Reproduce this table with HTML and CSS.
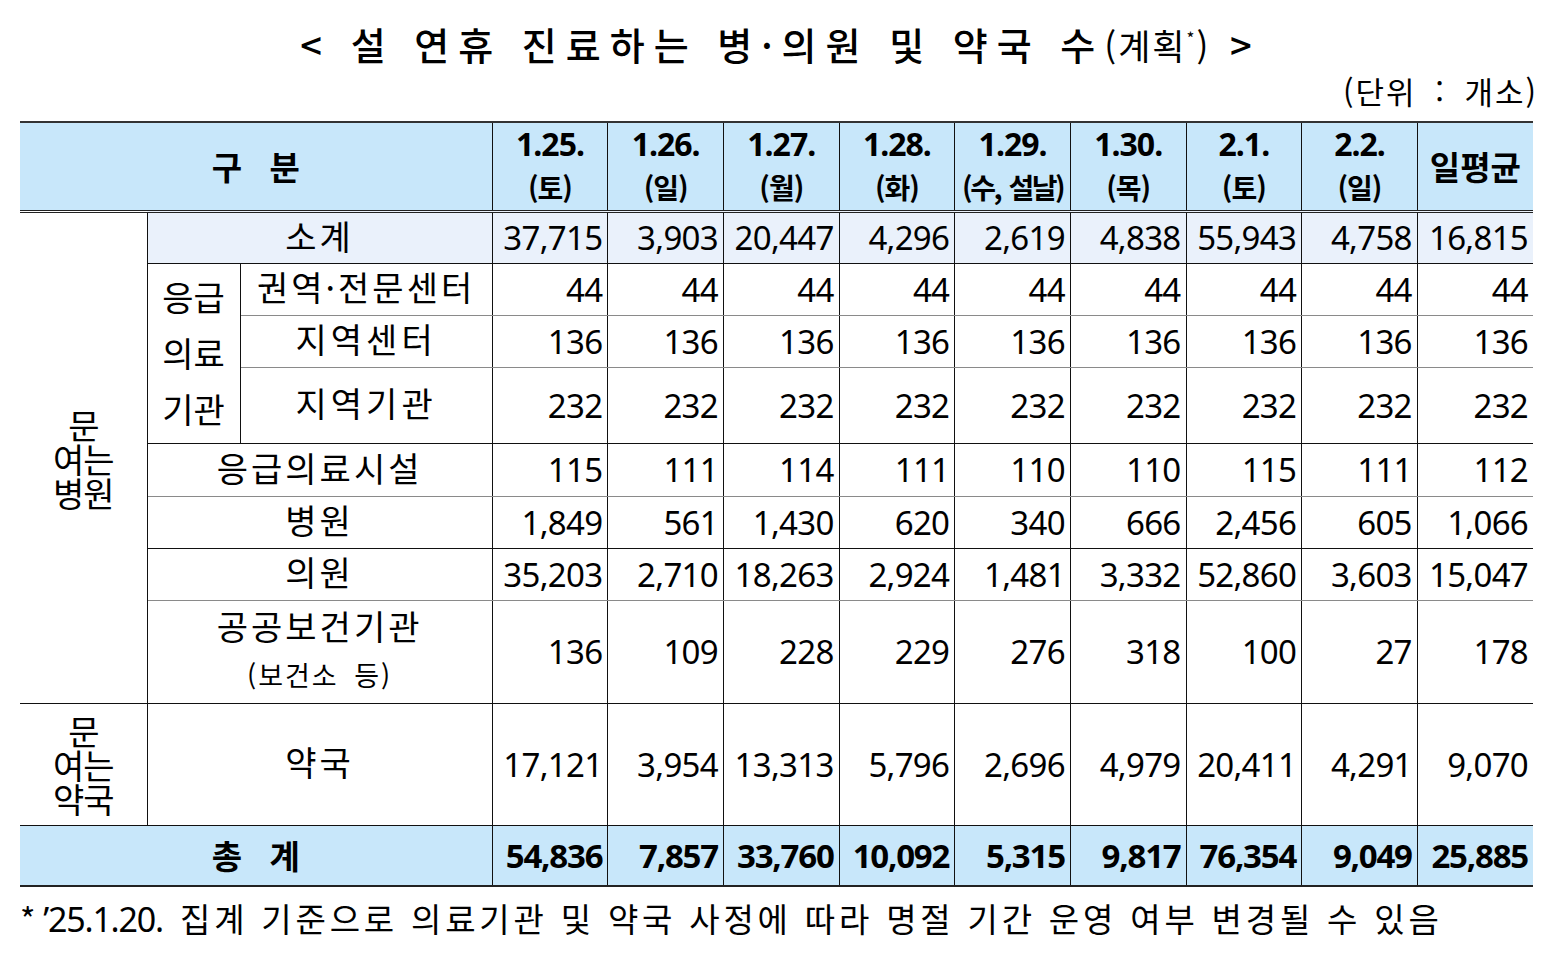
FILE: index.html
```html
<!DOCTYPE html>
<html lang="ko">
<head>
<meta charset="utf-8">
<title>설 연휴 진료하는 병·의원 및 약국 수</title>
<link rel="stylesheet" href="styles.css">
</head>
<body>
<div class="page">
  <h1 class="title">&lt; 설 연휴 진료하는 병·의원 및 약국 수<span class="plan">(계획<sup>*</sup>)</span> &gt;</h1>
  <div class="unit">(단위 : 개소)</div>
  <table class="stats">
    <colgroup>
      <col class="c1"><col class="c2"><col class="c3">
      <col class="cd"><col class="cd"><col class="cd"><col class="cd"><col class="cd"><col class="cd"><col class="cd"><col class="cd"><col class="cd">
    </colgroup>
    <thead>
      <tr class="r-head">
        <th colspan="3" class="gubun">구 분</th>
        <th><span class="d">1.25.</span><span class="w">(토)</span></th>
        <th><span class="d">1.26.</span><span class="w">(일)</span></th>
        <th class="gv"><span class="d">1.27.</span><span class="w">(월)</span></th>
        <th><span class="d">1.28.</span><span class="w">(화)</span></th>
        <th><span class="d">1.29.</span><span class="w narrow">(수, 설날)</span></th>
        <th><span class="d">1.30.</span><span class="w">(목)</span></th>
        <th class="gv"><span class="d">2.1.</span><span class="w">(토)</span></th>
        <th><span class="d">2.2.</span><span class="w">(일)</span></th>
        <th class="avg">일평균</th>
      </tr>
    </thead>
    <tbody>
      <tr class="r-sub">
        <td rowspan="8" class="side">문<br>여는<br>병원</td>
        <td colspan="2" class="lbl sub">소계</td>
        <td class="n sub">37,715</td><td class="n sub">3,903</td><td class="n sub gv">20,447</td><td class="n sub">4,296</td><td class="n sub">2,619</td><td class="n sub">4,838</td><td class="n sub gv">55,943</td><td class="n sub">4,758</td><td class="n sub">16,815</td>
      </tr>
      <tr class="r52 gl">
        <td rowspan="3" class="emg">응급<br>의료<br>기관</td>
        <td class="lbl">권역·전문센터</td>
        <td class="n">44</td><td class="n">44</td><td class="n gv">44</td><td class="n">44</td><td class="n">44</td><td class="n">44</td><td class="n gv">44</td><td class="n">44</td><td class="n">44</td>
      </tr>
      <tr class="r52 gl">
        <td class="lbl sp">지역센터</td>
        <td class="n">136</td><td class="n">136</td><td class="n gv">136</td><td class="n">136</td><td class="n">136</td><td class="n">136</td><td class="n gv">136</td><td class="n">136</td><td class="n">136</td>
      </tr>
      <tr class="r76">
        <td class="lbl sp">지역기관</td>
        <td class="n">232</td><td class="n">232</td><td class="n gv">232</td><td class="n">232</td><td class="n">232</td><td class="n">232</td><td class="n gv">232</td><td class="n">232</td><td class="n">232</td>
      </tr>
      <tr class="r53 gl">
        <td colspan="2" class="lbl">응급의료시설</td>
        <td class="n">115</td><td class="n">111</td><td class="n gv">114</td><td class="n">111</td><td class="n">110</td><td class="n">110</td><td class="n gv">115</td><td class="n">111</td><td class="n">112</td>
      </tr>
      <tr class="r52">
        <td colspan="2" class="lbl">병원</td>
        <td class="n">1,849</td><td class="n">561</td><td class="n gv">1,430</td><td class="n">620</td><td class="n">340</td><td class="n">666</td><td class="n gv">2,456</td><td class="n">605</td><td class="n">1,066</td>
      </tr>
      <tr class="r52 gl">
        <td colspan="2" class="lbl">의원</td>
        <td class="n">35,203</td><td class="n">2,710</td><td class="n gv">18,263</td><td class="n">2,924</td><td class="n">1,481</td><td class="n">3,332</td><td class="n gv">52,860</td><td class="n">3,603</td><td class="n">15,047</td>
      </tr>
      <tr class="r102">
        <td colspan="2" class="lbl pub"><span class="pub-main">공공보건기관</span><span class="pub-note">(보건소 등)</span></td>
        <td class="n">136</td><td class="n">109</td><td class="n gv">228</td><td class="n">229</td><td class="n">276</td><td class="n">318</td><td class="n gv">100</td><td class="n">27</td><td class="n">178</td>
      </tr>
      <tr class="r122">
        <td class="side">문<br>여는<br>약국</td>
        <td colspan="2" class="lbl">약국</td>
        <td class="n">17,121</td><td class="n">3,954</td><td class="n gv">13,313</td><td class="n">5,796</td><td class="n">2,696</td><td class="n">4,979</td><td class="n gv">20,411</td><td class="n">4,291</td><td class="n">9,070</td>
      </tr>
      <tr class="r-total">
        <th colspan="3" class="gubun">총 계</th>
        <td class="n tot">54,836</td><td class="n tot">7,857</td><td class="n tot gv">33,760</td><td class="n tot">10,092</td><td class="n tot">5,315</td><td class="n tot">9,817</td><td class="n tot gv">76,354</td><td class="n tot">9,049</td><td class="n tot">25,885</td>
      </tr>
    </tbody>
  </table>
  <p class="note">*<span class="nd">’25.1.20.</span> 집계 기준으로 의료기관 및 약국 사정에 따라 명절 기간 운영 여부 변경될 수 있음</p>
</div>
</body>
</html>
```

FILE: styles.css
```css
html, body {
  margin: 0;
  padding: 0;
  background: #ffffff;
}

body {
  font-family: "Noto Sans", "Noto Sans CJK KR", sans-serif;
  color: #000;
}

.page {
  width: 1513px;
  padding: 0 0 0 20px;
}

.title {
  margin: 0;
  padding-top: 17px;
  height: 56px;
  text-align: center;
  font-family: "Noto Sans CJK KR", sans-serif;
  font-weight: 500;
  font-size: 38px;
  line-height: 54px;
  letter-spacing: 9px;
  white-space: nowrap;
  padding-left: 8px;
}

.plan {
  font-weight: 400;
  font-size: 35px;
  letter-spacing: 2px;
}

.plan sup {
  font-size: 17px;
  vertical-align: 15px;
  line-height: 0;
}

.unit {
  text-align: right;
  font-family: "Noto Sans CJK KR", sans-serif;
  font-size: 31px;
  line-height: 40px;
  height: 40px;
  margin-right: -5px;
  letter-spacing: 2px;
  word-spacing: 8px;
  margin-top: -2px;
  margin-bottom: 10px;
}

.stats {
  width: 1513px;
  table-layout: fixed;
  border-collapse: collapse;
  border-top: 2px solid #333;
  border-bottom: 2px solid #222;
}

.c1 { width: 127px; }
.c2 { width: 93px; }
.c3 { width: 252px; }
.cd { width: 115.6px; }

.stats th,
.stats td {
  border: 1px solid #111;
  padding: 0;
  vertical-align: middle;
}

.stats tr > :first-child {
  border-left: none;
}

.stats tr > :last-child {
  border-right: none;
}

.stats .gv {
  border-left-color: #8a8a8a;
}

.stats tr.gl > td {
  border-bottom-color: #8a8a8a;
}

.stats tr.gl > td.emg {
  border-bottom-color: #111;
}

.r-head {
  height: 89px;
}

.r-head th {
  background: #c8e7fa;
  border-bottom: 3px double #222;
  text-align: center;
  font-weight: 700;
}

.gubun {
  font-family: "Noto Sans CJK KR", sans-serif;
  font-size: 33px;
  font-weight: 700;
  letter-spacing: 10px;
  word-spacing: -2px;
  padding-left: 10px !important;
  text-align: center;
}

.d {
  display: block;
  font-family: "Noto Sans", "Noto Sans CJK KR", sans-serif;
  font-size: 32px;
  line-height: 42px;
  font-weight: 700;
  letter-spacing: -1px;
  margin-top: 0;
}

.w {
  display: block;
  font-family: "Noto Sans CJK KR", sans-serif;
  font-size: 28px;
  line-height: 44px;
  font-weight: 700;
  letter-spacing: -1px;
}

.w.narrow {
  letter-spacing: -2.5px;
  word-spacing: 3px;
  white-space: nowrap;
  margin-left: -6px;
  margin-right: -6px;
}

.avg {
  font-family: "Noto Sans CJK KR", sans-serif;
  font-size: 33px;
  letter-spacing: 0;
}

.r-sub { height: 52px; }
.r52 { height: 52px; }
.r53 { height: 53px; }
.r76 { height: 76px; }
.r102 { height: 102px; }
.r122 { height: 122px; }
.r-total { height: 61px; }

.sub {
  background: #eaf1fb;
}

.side {
  font-family: "Noto Sans CJK KR", sans-serif;
  font-size: 34px;
  line-height: 34px;
  text-align: center;
  letter-spacing: -1px;
  padding-top: 2px !important;
}

.emg {
  font-family: "Noto Sans CJK KR", sans-serif;
  font-size: 34px;
  line-height: 56px;
  text-align: center;
  letter-spacing: 0;
}

.lbl {
  font-family: "Noto Sans CJK KR", sans-serif;
  font-size: 34px;
  text-align: center;
  line-height: 42px;
  letter-spacing: 3px;
  padding-bottom: 4px !important;
}

.lbl.sp {
  letter-spacing: 4px;
}

.pub-main {
  display: block;
  line-height: 50px;
  padding-top: 0;
}

.pub-note {
  display: block;
  font-size: 27px;
  line-height: 48px;
  letter-spacing: 2px;
  word-spacing: 6px;
}

.n {
  text-align: right;
  padding-right: 5px !important;
  font-family: "Noto Sans", sans-serif;
  font-size: 33px;
  letter-spacing: -0.7px;
  white-space: nowrap;
}

.r-total th,
.r-total td {
  background: #c8e7fa;
}

.r-total th {
  font-weight: 700;
}

.tot {
  font-weight: 700;
  letter-spacing: -1.2px;
}

.note {
  margin: 0;
  padding-top: 10px;
  font-family: "Noto Sans CJK KR", sans-serif;
  font-size: 33px;
  line-height: 42px;
  letter-spacing: 3.8px;
  white-space: nowrap;
}

.nd {
  font-family: "Noto Sans", sans-serif;
  font-size: 34px;
  letter-spacing: -1.2px;
  margin-right: 4px;
  margin-left: 4px;
}
```
